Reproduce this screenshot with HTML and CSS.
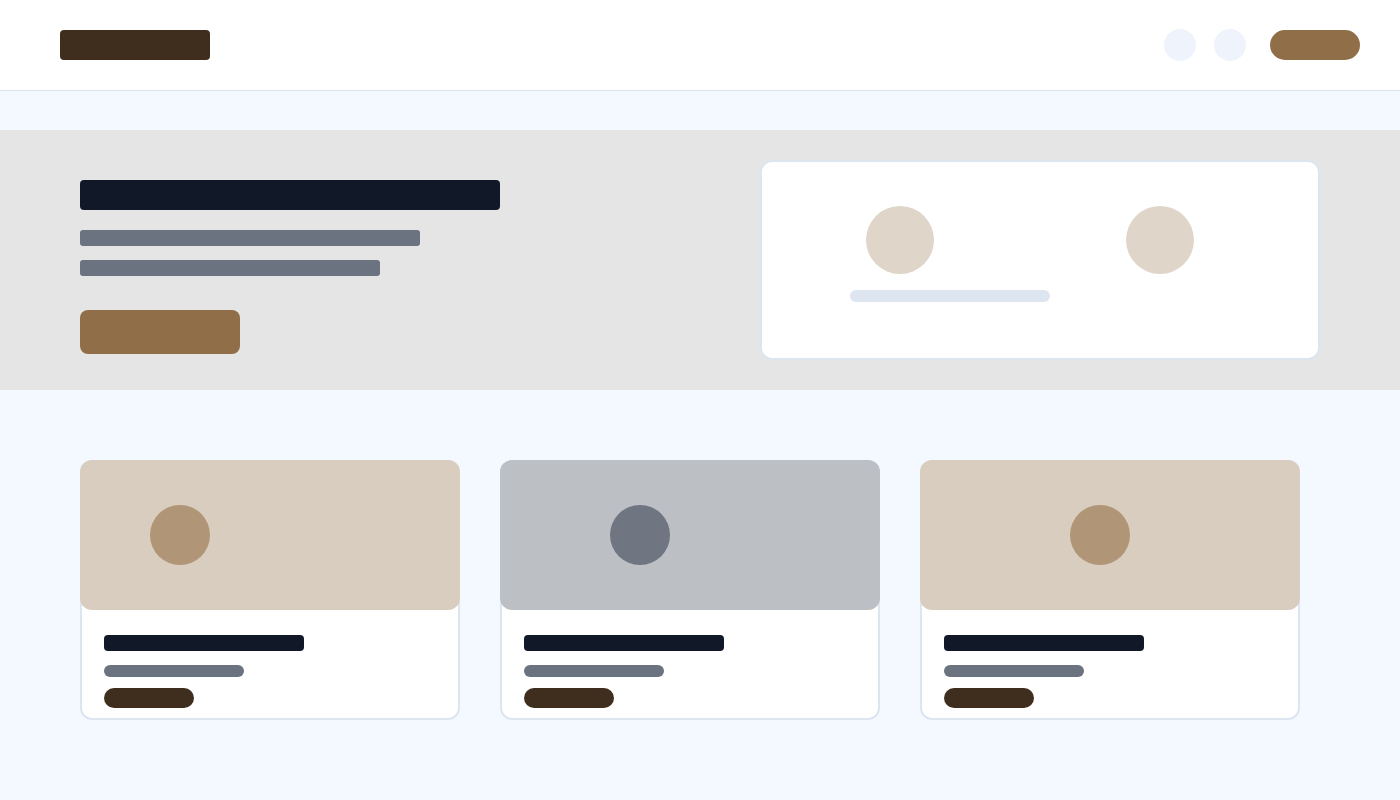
FILE: index.html
```html
<!DOCTYPE html>
<html lang="en">
<head>
<meta charset="utf-8">
<title>Skeleton</title>
<link rel="stylesheet" href="styles.css">
</head>
<body>
<header class="topbar">
  <div class="logo"></div>
  <div class="actions">
    <span class="icon-dot"></span>
    <span class="icon-dot"></span>
    <span class="cta-pill"></span>
  </div>
</header>
<section class="hero">
  <div class="hero-text">
    <div class="hero-title"></div>
    <div class="hero-line hero-line-a"></div>
    <div class="hero-line hero-line-b"></div>
    <div class="hero-btn"></div>
  </div>
  <div class="hero-card">
    <div class="hero-avatars">
      <span class="avatar"></span>
      <span class="avatar"></span>
    </div>
    <div class="hero-bar"></div>
  </div>
</section>
<main class="cards">
  <article class="card">
    <div class="card-media media-tan"><span class="media-dot dot-tan pos-1"></span></div>
    <div class="card-body">
      <div class="card-title"></div>
      <div class="card-sub"></div>
      <div class="card-tag"></div>
    </div>
  </article>
  <article class="card">
    <div class="card-media media-grey"><span class="media-dot dot-grey pos-2"></span></div>
    <div class="card-body">
      <div class="card-title"></div>
      <div class="card-sub"></div>
      <div class="card-tag"></div>
    </div>
  </article>
  <article class="card">
    <div class="card-media media-tan"><span class="media-dot dot-tan pos-3"></span></div>
    <div class="card-body">
      <div class="card-title"></div>
      <div class="card-sub"></div>
      <div class="card-tag"></div>
    </div>
  </article>
</main>
</body>
</html>
```
FILE: styles.css
```css
* { box-sizing: border-box; }
html, body { margin: 0; padding: 0; }
body {
  background: #f4f8ff;
  font-family: "Liberation Sans", Arial, sans-serif;
  width: 1400px;
  min-height: 800px;
}
.topbar {
  height: 91px;
  background: #ffffff;
  border-bottom: 1px solid #dde5f0;
  display: flex;
  align-items: center;
  justify-content: space-between;
  padding: 0 40px 1px 60px;
}
.logo {
  width: 150px;
  height: 30px;
  border-radius: 4px;
  background: #3f2e1e;
}
.actions {
  display: flex;
  align-items: center;
  gap: 18px;
}
.icon-dot {
  width: 32px;
  height: 32px;
  border-radius: 50%;
  background: #eef3fc;
}
.cta-pill {
  width: 90px;
  height: 30px;
  border-radius: 15px;
  background: #8f6e48;
  margin-left: 6px;
}
.hero {
  margin-top: 39px;
  height: 260px;
  background: #e5e5e5;
  display: flex;
  justify-content: space-between;
  padding: 30px 80px 30px 80px;
}
.hero-text {
  padding-top: 20px;
  display: flex;
  flex-direction: column;
}
.hero-title {
  width: 420px;
  height: 30px;
  border-radius: 4px;
  background: #111827;
}
.hero-line {
  height: 16px;
  border-radius: 3px;
  background: #6b7280;
}
.hero-line-a { width: 340px; margin-top: 20px; }
.hero-line-b { width: 300px; margin-top: 14px; }
.hero-btn {
  width: 160px;
  height: 44px;
  border-radius: 8px;
  background: #8f6e48;
  margin-top: 34px;
}
.hero-card {
  width: 560px;
  height: 200px;
  background: #ffffff;
  border: 2px solid #dde5f0;
  border-radius: 12px;
  padding: 44px 0 0 88px;
}
.hero-avatars {
  display: flex;
  gap: 192px;
  padding-left: 16px;
}
.avatar {
  width: 68px;
  height: 68px;
  border-radius: 50%;
  background: #dfd5c9;
}
.hero-bar {
  width: 200px;
  height: 12px;
  border-radius: 6px;
  background: #dde5f0;
  margin-top: 16px;
}
.cards {
  display: flex;
  gap: 40px;
  padding: 70px 80px 0 80px;
}
.card {
  width: 380px;
  height: 260px;
  background: #ffffff;
  border: 2px solid #dde5f0;
  border-radius: 12px;
}
.card-media {
  height: 150px;
  margin: -2px -2px 0 -2px;
  border-radius: 12px;
  display: flex;
  align-items: center;
}
.media-tan { background: #d9cdbf; }
.media-grey { background: #bcbfc4; }
.media-dot {
  width: 60px;
  height: 60px;
  border-radius: 50%;
}
.dot-tan { background: #b09577; }
.dot-grey { background: #6f7682; }
.pos-1 { margin-left: 70px; }
.pos-2 { margin-left: 110px; }
.pos-3 { margin-left: 150px; }
.card-body {
  padding: 25px 22px 0 22px;
  display: flex;
  flex-direction: column;
}
.card-title {
  width: 200px;
  height: 16px;
  border-radius: 4px;
  background: #111827;
}
.card-sub {
  width: 140px;
  height: 12px;
  border-radius: 6px;
  background: #6b7280;
  margin-top: 14px;
}
.card-tag {
  width: 90px;
  height: 20px;
  border-radius: 10px;
  background: #3f2e1e;
  margin-top: 11px;
}
```
